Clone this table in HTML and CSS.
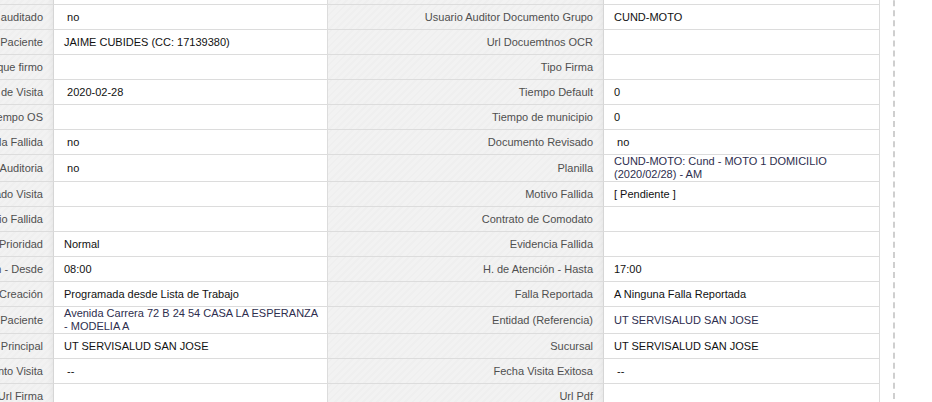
FILE: index.html
```html
<!DOCTYPE html>
<html lang="es">
<head>
<meta charset="utf-8">
<title>Detalle de visita</title>
<link rel="stylesheet" href="styles.css">
</head>
<body>
<div class="frame">
  <div class="detail">
    <div class="lbl"></div><div class="val"></div><div class="lbl"></div><div class="val"></div>

    <div class="lbl">Documento auditado</div><div class="val">&nbsp;no</div><div class="lbl">Usuario Auditor Documento Grupo</div><div class="val">CUND-MOTO</div>

    <div class="lbl">Nombre Paciente</div><div class="val">JAIME CUBIDES (CC: 17139380)</div><div class="lbl">Url Docuemtnos OCR</div><div class="val"></div>

    <div class="lbl">Persona que firmo</div><div class="val"></div><div class="lbl">Tipo Firma</div><div class="val"></div>

    <div class="lbl">Fecha de Visita</div><div class="val">&nbsp;2020-02-28</div><div class="lbl">Tiempo Default</div><div class="val">0</div>

    <div class="lbl">Tiempo OS</div><div class="val"></div><div class="lbl">Tiempo de municipio</div><div class="val">0</div>

    <div class="lbl">Reportada Fallida</div><div class="val">&nbsp;no</div><div class="lbl">Documento Revisado</div><div class="val">&nbsp;no</div>

    <div class="lbl">Requiere Auditoria</div><div class="val">&nbsp;no</div><div class="lbl">Planilla</div><div class="val alt nowrap">CUND-MOTO: Cund - MOTO 1 DOMICILIO<br>(2020/02/28) - AM</div>

    <div class="lbl">Estado Visita</div><div class="val"></div><div class="lbl">Motivo Fallida</div><div class="val">[ Pendiente ]</div>

    <div class="lbl">Comentario Fallida</div><div class="val"></div><div class="lbl">Contrato de Comodato</div><div class="val"></div>

    <div class="lbl">Prioridad</div><div class="val">Normal</div><div class="lbl">Evidencia Fallida</div><div class="val"></div>

    <div class="lbl">H. de Atención - Desde</div><div class="val">08:00</div><div class="lbl">H. de Atención - Hasta</div><div class="val">17:00</div>

    <div class="lbl">Tipo Creación</div><div class="val">Programada desde Lista de Trabajo</div><div class="lbl">Falla Reportada</div><div class="val">A Ninguna Falla Reportada</div>

    <div class="lbl">Dirección Paciente</div><div class="val alt nowrap">Avenida Carrera 72 B 24 54 CASA LA ESPERANZA<br>- MODELIA A</div><div class="lbl">Entidad (Referencia)</div><div class="val alt">UT SERVISALUD SAN JOSE</div>

    <div class="lbl">Entidad Principal</div><div class="val">UT SERVISALUD SAN JOSE</div><div class="lbl">Sucursal</div><div class="val">UT SERVISALUD SAN JOSE</div>

    <div class="lbl">Fecha Intento Visita</div><div class="val">&nbsp;--</div><div class="lbl">Fecha Visita Exitosa</div><div class="val">&nbsp;--</div>

    <div class="lbl">Url Firma</div><div class="val"></div><div class="lbl">Url Pdf</div><div class="val"></div>
  </div>
</div>
</body>
</html>
```
FILE: styles.css
```css
html, body {
  margin: 0;
  padding: 0;
  background: #ffffff;
  overflow: hidden;
}

body {
  font-family: "Liberation Sans", Arial, sans-serif;
  font-size: 11px;
}

.frame {
  display: flex;
  width: max-content;
  margin-left: -222px;
  margin-top: -20px;
  padding-right: 13px;
  border-right: 2px dashed #cfcfcf;
}

.detail {
  display: grid;
  grid-template-columns: 276px 274px 276px 276px;
}

.lbl,
.val {
  box-sizing: border-box;
  min-height: 25px;
  display: flex;
  align-items: center;
  padding: 0 10px;
  line-height: 13px;
  border-bottom: 1px solid #dcdcdc;
  border-right: 1px solid #dcdcdc;
}

.lbl {
  justify-content: flex-end;
  text-align: right;
  color: #4f4f4f;
  background-color: #f1f1f1;
  background-image:
    linear-gradient(to right, rgba(0, 0, 0, 0) calc(100% - 5px), rgba(0, 0, 0, 0.035) 100%),
    repeating-linear-gradient(-45deg, #f2f2f2 0 3px, #efefef 3px 5px);
  border-right-color: #d6d6d6;
}

.val {
  color: #111111;
  background: #ffffff;
}

.val.alt {
  color: #2e2e4e;
}

.val.nowrap {
  white-space: nowrap;
}
```
